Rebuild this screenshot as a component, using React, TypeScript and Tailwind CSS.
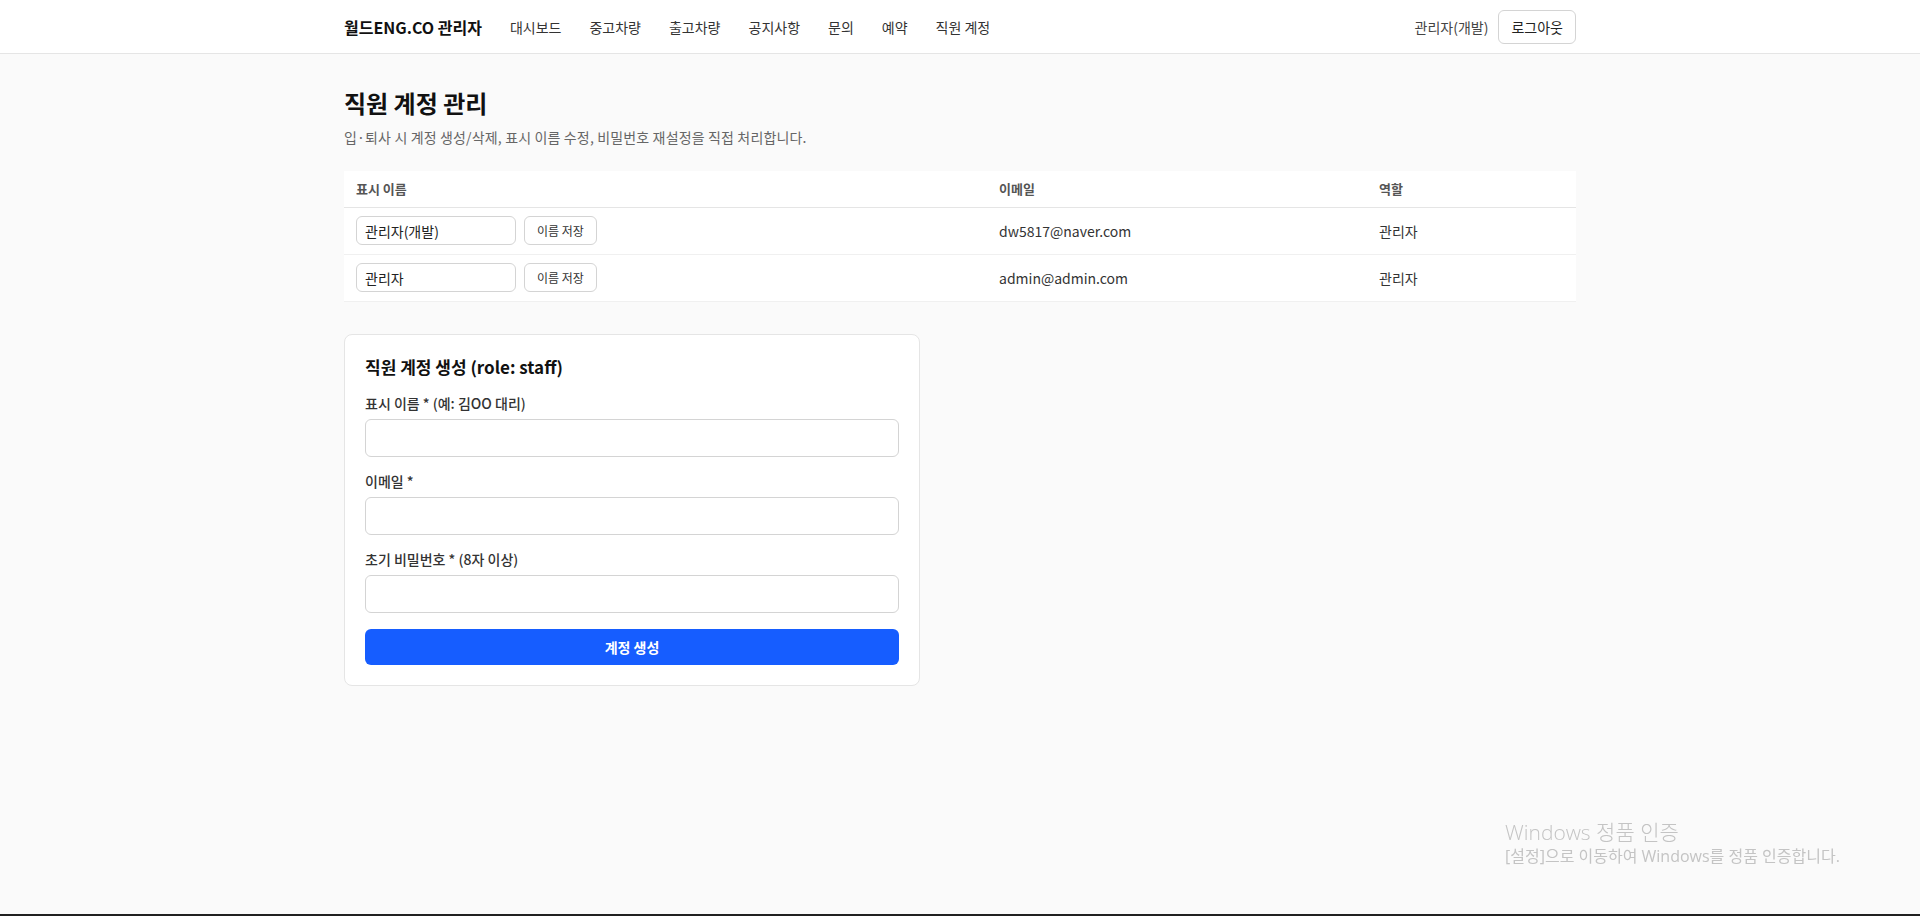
import React from 'react';

const navItems = ['대시보드', '중고차량', '출고차량', '공지사항', '문의', '예약', '직원 계정'];

const staff = [
  { name: '관리자(개발)', email: 'dw5817@naver.com', role: '관리자' },
  { name: '관리자', email: 'admin@admin.com', role: '관리자' },
];

const fields = [
  { label: '표시 이름 * (예: 김OO 대리)', type: 'text' },
  { label: '이메일 *', type: 'email' },
  { label: '초기 비밀번호 * (8자 이상)', type: 'password' },
];

const Header: React.FC = () => {
  return <header className="bg-white border-b border-[#e5e5e5]">
      <div className="max-w-[1280px] mx-auto px-6 h-[53px] flex items-center justify-between">
        <div className="flex items-center">
          <span className="text-base font-bold text-[#111]">월드ENG.CO 관리자</span>
          <nav className="flex items-center gap-7 ml-7">
            {navItems.map(item => <a key={item} href="#" className="text-sm text-[#333]">{item}</a>)}
          </nav>
        </div>
        <div className="flex items-center gap-2.5">
          <span className="text-sm text-[#444]">관리자(개발)</span>
          <button className="h-[34px] px-3 text-sm text-[#222] bg-white border border-[#d4d4d4] rounded-md">로그아웃</button>
        </div>
      </div>
    </header>;
};

const StaffTable: React.FC = () => {
  return <table className="w-full mt-6 bg-white border-collapse">
      <thead>
        <tr className="border-b border-[#e5e5e5]">
          <th className="w-[643px] h-9 px-3 text-left text-[13px] font-semibold text-[#555]">표시 이름</th>
          <th className="w-[380px] h-9 px-3 text-left text-[13px] font-semibold text-[#555]">이메일</th>
          <th className="h-9 px-3 text-left text-[13px] font-semibold text-[#555]">역할</th>
        </tr>
      </thead>
      <tbody>
        {staff.map(s => <tr key={s.email} className="border-b border-[#f0f0f0]">
            <td className="h-[47px] px-3">
              <div className="flex items-center gap-2">
                <input defaultValue={s.name} className="w-[160px] h-[29px] px-2 text-sm text-[#222] border border-[#d4d4d4] rounded-md outline-none" />
                <button className="h-[29px] px-3 text-xs text-[#333] bg-white border border-[#d4d4d4] rounded-md">이름 저장</button>
              </div>
            </td>
            <td className="h-[47px] px-3 text-sm text-[#333]">{s.email}</td>
            <td className="h-[47px] px-3 text-sm text-[#333]">{s.role}</td>
          </tr>)}
      </tbody>
    </table>;
};

const CreateStaffForm: React.FC = () => {
  return <div className="max-w-xl mt-8 bg-white border border-[#e5e5e5] rounded-lg p-5">
      <div className="flex flex-col gap-3.5">
        <h2 className="text-[17px] leading-6 font-bold text-[#111]">직원 계정 생성 (role: staff)</h2>
        {fields.map(f => <label key={f.label} className="flex flex-col">
            <span className="text-sm leading-5 font-medium text-[#333] mb-1.5">{f.label}</span>
            <input type={f.type} className="h-[38px] px-3 text-sm border border-[#d4d4d4] rounded-md outline-none bg-white" />
          </label>)}
        <button className="h-9 mt-0.5 w-full rounded-md bg-[#165dff] text-white text-sm font-bold">계정 생성</button>
      </div>
    </div>;
};

const App: React.FC = () => {
  return <div className="min-h-screen bg-[#fafafa] font-['Noto_Sans_CJK_KR','Noto_Sans',sans-serif]">
      <Header />
      <main className="max-w-[1280px] mx-auto px-6 pt-[33px] pb-16">
        <h1 className="text-2xl font-bold text-[#111]">직원 계정 관리</h1>
        <p className="mt-2 text-sm tracking-[0.15px] text-[#666]">입·퇴사 시 계정 생성/삭제, 표시 이름 수정, 비밀번호 재설정을 직접 처리합니다.</p>
        <StaffTable />
        <CreateStaffForm />
      </main>

      {/* activation watermark + taskbar edge */}
      <div className="fixed left-[1505px] top-[819px] pointer-events-none text-[#c4c4c4] font-['Open_Sans','Noto_Sans_CJK_KR',sans-serif]">
        <div className="text-[21px] leading-[26px] font-light">Windows 정품 인증</div>
        <div className="text-[16px] leading-[22px]">[설정]으로 이동하여 Windows를 정품 인증합니다.</div>
      </div>
      <div className="fixed left-0 right-0 bottom-0 h-[2px] bg-[#202020]" />
    </div>;
};

export default App;
